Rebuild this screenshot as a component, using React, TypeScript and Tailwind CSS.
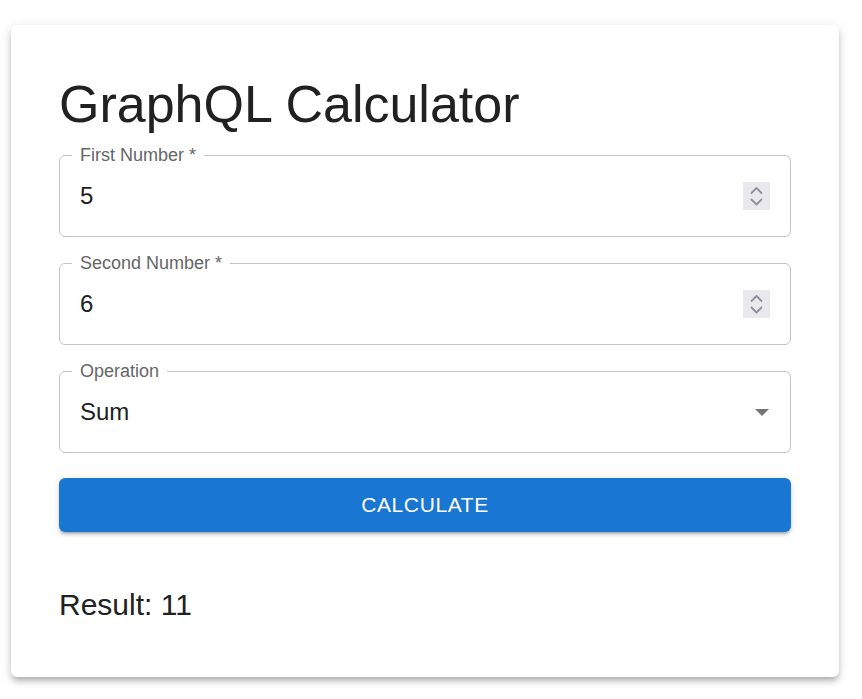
import React, { useState } from 'react';

const font = { fontFamily: '"Liberation Sans", Arial, sans-serif' };

const Spinner: React.FC = () => (
  <svg width="27" height="28" viewBox="0 0 27 28" fill="none">
    <rect width="27" height="28" fill="#e9e9ed" />
    <g stroke="#8f8f9d" strokeWidth="1.8" strokeLinecap="round" strokeLinejoin="round">
      <path d="M8.5 11 L13.5 6 L18.5 11" />
      <path d="M8.5 17.5 L13.5 22.5 L18.5 17.5" />
    </g>
  </svg>
);

const Field: React.FC<{ label: string; value: string; kind: 'number' | 'select'; className?: string }> = ({ label, value, kind, className }) => (
  <div className={`relative h-[82px] border border-[#c4c4c4] rounded-[6px] flex items-center pl-[20px] pr-[20px] ${className ?? ''}`}>
    <span className="absolute left-[12px] -top-[10px] bg-white px-[8px] text-[18px] leading-[18px] text-[#666666]">
      {label}
    </span>
    <span className="flex-1 text-[24px] leading-[24px] text-[#212121]">{value}</span>
    {kind === 'number' ? (
      <Spinner />
    ) : (
      <svg width="14" height="7" viewBox="0 0 14 7" className="mr-[1px]">
        <path d="M0 0 L14 0 L7 7 Z" fill="#757575" />
      </svg>
    )}
  </div>
);

const App: React.FC = () => {
  const [result] = useState(11);

  return (
    <div className="min-h-[699px] w-[862px] bg-white pt-[25px] pl-[11px]" style={font}>
      <div className="w-[828px] h-[652px] bg-white rounded-[6px] p-[48px] flex flex-col shadow-[0px_4px_5px_-3px_rgba(0,0,0,0.2),0px_5px_6px_0px_rgba(0,0,0,0.14),0px_2px_12px_0px_rgba(0,0,0,0.12)]">
        <h1 className="text-[52px] leading-[63px] text-[#212121]">GraphQL Calculator</h1>

        <Field label="First Number *" value="5" kind="number" className="mt-[19px]" />
        <Field label="Second Number *" value="6" kind="number" className="mt-[26px]" />
        <Field label="Operation" value="Sum" kind="select" className="mt-[26px]" />

        <button className="mt-[25px] h-[54px] w-full rounded-[6px] bg-[#1976d2] text-white text-[21px] tracking-[0.02857em] uppercase shadow-[0px_4px_2px_-3px_rgba(0,0,0,0.2),0px_3px_3px_0px_rgba(0,0,0,0.14),0px_1px_7px_0px_rgba(0,0,0,0.12)]">
          Calculate
        </button>

        <div className="mt-[55px] text-[30px] leading-[36px] text-[#212121]">Result: {result}</div>
      </div>
    </div>
  );
};

export default App;
